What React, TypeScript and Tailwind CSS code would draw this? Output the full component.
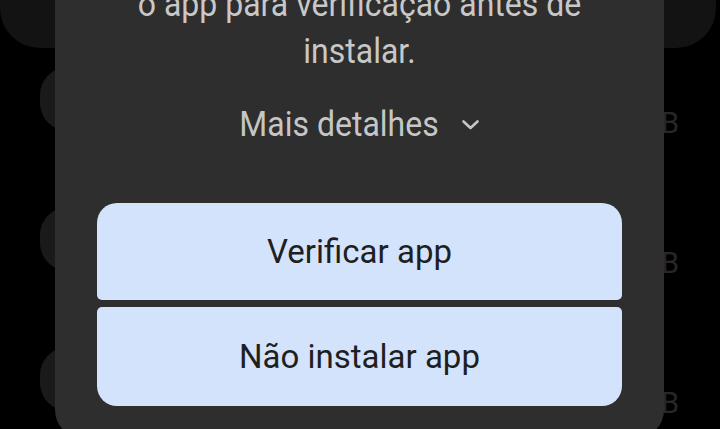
// Install warning sheet — dialog over a dimmed app list
const rows = [0, 1, 2];

function ChevronDown() {
  return (
    <svg className="w-[19px] h-[11px]" viewBox="0 0 19 11" fill="none" stroke="currentColor" strokeWidth={2.6} strokeLinecap="round" strokeLinejoin="round">
      <path d="M2.5 2.5l7 6.5 7-6.5" />
    </svg>
  );
}

export default function App() {
  return (
    <div className="relative w-[720px] h-[429px] overflow-hidden bg-black font-['Roboto',sans-serif]">
      {/* dimmed background list */}
      <div className="h-[48px] w-[716px] rounded-b-[40px] bg-[#131313]" />
      <div className="pl-[40px] pr-[41px]">
        {rows.map((r) => (
          <div key={r} className="h-[140px] flex justify-between items-start">
            <div className="mt-[19px] w-[70px] h-[64px] rounded-[28px] bg-[#1a1a1a]" />
            <div className="mt-[58px] text-[29px] leading-[34px] text-[#272727]">12 MB</div>
          </div>
        ))}
      </div>

      {/* dialog */}
      <div className="absolute left-[55px] top-[-40px] bottom-[-9px] w-[609px] rounded-[28px] bg-[#2e2e2e] flex flex-col items-center pt-[21px]">
        <div className="text-[32px] leading-[47px] text-[#c8c8c8] text-center">
          <span className="block scale-y-[1.12]">o app para verificação antes de</span>
          <span className="block scale-y-[1.12]">instalar.</span>
        </div>
        <button className="mt-[29px] flex items-center gap-[22px] text-[#c6c6c6]">
          <span className="text-[32px] leading-[40px] scale-y-[1.1]">Mais detalhes</span>
          <ChevronDown />
        </button>
        <div className="mt-[59px] w-[525px] flex flex-col gap-[7px]">
          <button className="h-[97px] rounded-t-[20px] rounded-b-[5px] bg-[#d4e3fc] text-[#1f1f1f] text-[33px]">
            Verificar app
          </button>
          <button className="h-[99px] rounded-t-[5px] rounded-b-[20px] bg-[#d4e3fc] text-[#1f1f1f] text-[33px]">
            Não instalar app
          </button>
        </div>
      </div>
    </div>
  );
}
